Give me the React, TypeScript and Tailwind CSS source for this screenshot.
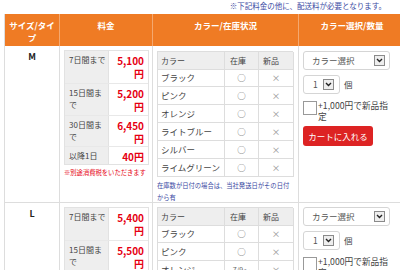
import React from "react";

type PriceRow = { label: React.ReactNode; value: React.ReactNode; h: string };

function PriceTable({ rows, note }: { rows: PriceRow[]; note?: boolean }) {
  return (
    <div className="w-[85px]">
      <div className="border border-[#e2e2e2]">
        {rows.map((r, i) => (
          <div key={i} className={`flex ${r.h} ${i > 0 ? "border-t border-[#e8e8e8]" : ""}`}>
            <div className="w-[44px] shrink-0 bg-[#eeeeee] border-r border-[#e2e2e2] pl-[4px] pt-[3px] text-[8px] leading-[12px] text-[#444] whitespace-nowrap">
              {r.label}
            </div>
            <div className="flex-1 bg-white pr-[4px] pt-[3px] text-right text-[10px] font-bold leading-[13px] text-[#e60012] whitespace-nowrap">
              {r.value}
            </div>
          </div>
        ))}
      </div>
      {note && (
        <div className="mt-[3px] text-[6.3px] leading-[9px] text-[#e60012] whitespace-nowrap">※別途消費税をいただきます</div>
      )}
    </div>
  );
}

type ColorRow = { name: string; stock: React.ReactNode; isNew: string };

function ColorTable({ rows, note }: { rows: ColorRow[]; note?: boolean }) {
  return (
    <div className="w-[136px]">
      <div className="border-l border-t border-[#dddddd]">
        <div className="grid grid-cols-[67px_34px_35px] h-[17px] bg-[#eeeeee] text-[8px] leading-[17px] text-[#444]">
          <div className="border-r border-b border-[#dddddd] pl-[3px]">カラー</div>
          <div className="border-r border-b border-[#dddddd] pl-[5px]">在庫</div>
          <div className="border-r border-b border-[#dddddd] pl-[4px]">新品</div>
        </div>
        {rows.map((r, i) => (
          <div key={i} className="grid grid-cols-[67px_34px_35px] h-[18px] bg-white text-[8.5px] leading-[17px] text-[#444]">
            <div className="border-r border-b border-[#dddddd] pl-[3px] whitespace-nowrap">{r.name}</div>
            <div className="border-r border-b border-[#dddddd] text-center text-[#666]">{r.stock}</div>
            <div className="border-r border-b border-[#dddddd] text-center text-[#999]">{r.isNew}</div>
          </div>
        ))}
      </div>
      {note && (
        <div className="mt-[3px] text-[6.3px] leading-[12px] text-[#3b4aa3] whitespace-nowrap">
          在庫数が日付の場合は、当社発送日がその日付
          <br />
          から有
        </div>
      )}
    </div>
  );
}

function Arrow() {
  return (
    <div className="w-[11px] h-[11px] border border-[#8a8a8a] bg-[#eeeeee] flex items-center justify-center">
      <svg width="7" height="5" viewBox="0 0 7 5">
        <path d="M1 1 L3.5 3.5 L6 1" fill="none" stroke="#222" strokeWidth="1.4" />
      </svg>
    </div>
  );
}

function Chooser({ button }: { button?: boolean }) {
  return (
    <div className="flex flex-col">
      <div className="w-[87px] h-[19px] border border-[#d5d5d5] rounded-[3px] bg-white flex items-center justify-between pl-[8px] pr-[4px] text-[8.5px] text-[#555]">
        <span>カラー選択</span>
        <Arrow />
      </div>
      <div className="flex items-center mt-[5px]">
        <div className="w-[37px] h-[19px] border border-[#d5d5d5] rounded-[3px] bg-white flex items-center pl-[9px] gap-[5px] text-[8.5px] text-[#555]">
          <span>1</span>
          <Arrow />
        </div>
        <span className="ml-[4px] text-[8.5px] text-[#444]">個</span>
      </div>
      <div className="flex items-start mt-[7px]">
        <div className="w-[14px] h-[14px] border border-[#999] bg-white shrink-0" />
        <div className="ml-[1px] text-[8.7px] leading-[11px] text-[#444] -mt-[1px]">
          +1,000円で新品指
          <br />
          定
        </div>
      </div>
      {button && (
        <div className="mt-[4px] w-[70px] h-[20px] rounded-[3px] bg-[#dd2323] text-white text-[8.5px] flex items-center justify-center">
          カートに入れる
        </div>
      )}
    </div>
  );
}

const cols = "grid grid-cols-[55px_93px_146px_106px]";

export default function App() {
  const priceM: PriceRow[] = [
    { label: "7日間まで", value: <>5,100<br />円</>, h: "h-[32px]" },
    { label: <>15日間ま<br />で</>, value: <>5,200<br />円</>, h: "h-[32px]" },
    { label: <>30日間ま<br />で</>, value: <>6,450<br />円</>, h: "h-[31px]" },
    { label: "以降1日", value: "40円", h: "h-[18px]" },
  ];
  const priceL: PriceRow[] = [
    { label: "7日間まで", value: <>5,400<br />円</>, h: "h-[32px]" },
    { label: <>15日間ま<br />で</>, value: <>5,500<br />円</>, h: "h-[32px]" },
    { label: <>30日間ま<br />で</>, value: <>6,750<br />円</>, h: "h-[31px]" },
  ];
  const colorsM: ColorRow[] = ["ブラック", "ピンク", "オレンジ", "ライトブルー", "シルバー", "ライムグリーン"].map((n) => ({
    name: n,
    stock: "○",
    isNew: "×",
  }));
  const colorsL: ColorRow[] = [
    { name: "ブラック", stock: "○", isNew: "×" },
    { name: "ピンク", stock: "○", isNew: "×" },
    { name: "オレンジ", stock: <span className="text-[7px]">7/9〜</span>, isNew: "×" },
  ];

  return (
    <div className="w-[400px] h-[270px] overflow-hidden bg-white font-['Noto_Sans_CJK_JP',sans-serif]">
      <div className="h-[14px] pr-[14px] text-right text-[7.5px] leading-[12px] text-[#3b4aa3]">
        ※下記料金の他に、配送料が必要となります。
      </div>
      <div className="ml-[4px] w-[400px] border-l border-[#dddddd]">
        <div className={`${cols} h-[32px] bg-[#ef7b24] text-white font-bold text-[8.5px] leading-[12px] text-center`}>
          <div className="border-r border-[#f4a86f] px-[2px] pt-[5px]">
            サイズ/タイ
            <br />
            プ
          </div>
          <div className="border-r border-[#f4a86f] px-[5px] pt-[5px]">料金</div>
          <div className="border-r border-[#f4a86f] px-[5px] pt-[5px]">カラー/在庫状況</div>
          <div className="px-[5px] pt-[5px]">カラー選択/数量</div>
        </div>
        <div className={`${cols} h-[157px] border-b border-[#dddddd]`}>
          <div className="border-r border-[#dddddd] text-center font-bold text-[9px] leading-[12px] pt-[5px] text-[#222]">M</div>
          <div className="border-r border-[#dddddd] pl-[4px] pt-[4px]">
            <PriceTable rows={priceM} note />
          </div>
          <div className="border-r border-[#dddddd] pl-[4px] pt-[5px]">
            <ColorTable rows={colorsM} note />
          </div>
          <div className="pl-[4px] pt-[5px]">
            <Chooser button />
          </div>
        </div>
        <div className={`${cols} h-[120px]`}>
          <div className="border-r border-[#dddddd] text-center font-bold text-[9px] leading-[12px] pt-[5px] text-[#222]">L</div>
          <div className="border-r border-[#dddddd] pl-[4px] pt-[4px]">
            <PriceTable rows={priceL} />
          </div>
          <div className="border-r border-[#dddddd] pl-[4px] pt-[4px]">
            <ColorTable rows={colorsL} />
          </div>
          <div className="pl-[4px] pt-[4px]">
            <Chooser />
          </div>
        </div>
      </div>
    </div>
  );
}
